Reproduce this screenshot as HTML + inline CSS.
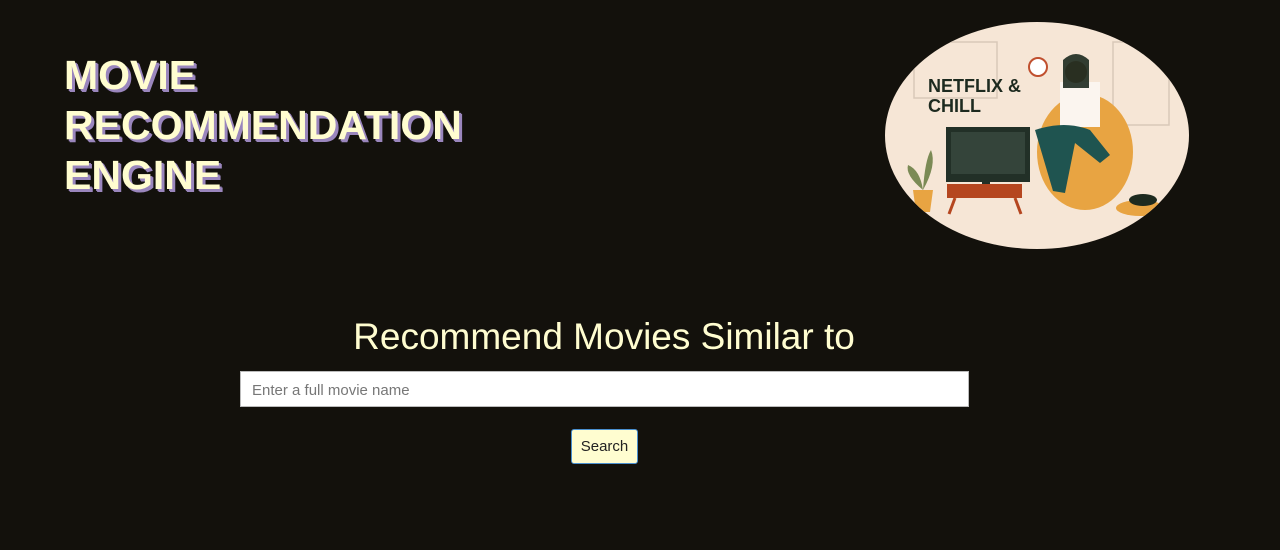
<!DOCTYPE html>
<html><head><meta charset="utf-8"><style>
body{margin:0;width:1280px;height:550px;background:#13110c;overflow:hidden;font-family:"Liberation Sans",sans-serif;position:relative}
.t{position:absolute;left:64px;top:50px;color:#fffdd0;font-weight:bold;font-size:41px;line-height:50px;letter-spacing:0;text-shadow:3px 3px 0 #9a86bd,2px 2px 0 #9a86bd}
h2{position:absolute;left:0;width:1208px;top:316px;margin:0;text-align:center;color:#fffdd0;font-weight:normal;font-size:37px}
.in{position:absolute;left:240px;top:371px;width:727px;height:34px;background:#fff;border:1px solid #bbb;box-sizing:content-box}
.in span{position:absolute;left:11px;top:10px;font-size:15px;color:#777}
.b{position:absolute;left:571px;top:429px;width:65px;height:33px;background:#fffdd0;border:1px solid #4a90d0;border-radius:3px;font-size:15px;color:#222;text-align:center;line-height:34px}
</style></head><body>
<div class="t">MOVIE<br>RECOMMENDATION<br>ENGINE</div>
<svg style="position:absolute;left:885px;top:22px" width="304" height="227" viewBox="0 0 304 227">
<defs><clipPath id="c"><ellipse cx="152" cy="113.5" rx="152" ry="113.5"/></clipPath></defs>
<g clip-path="url(#c)">
<rect width="304" height="227" fill="#f6e6d6"/>
<rect x="29" y="20" width="83" height="56" fill="none" stroke="#d9c8b8" stroke-width="1.5"/>
<rect x="228" y="20" width="56" height="83" fill="none" stroke="#d9c8b8" stroke-width="1.5"/>
<circle cx="153" cy="45" r="9" fill="#fff" stroke="#c0502f" stroke-width="2"/>
<text x="43" y="70" font-family="Liberation Sans" font-weight="bold" font-size="18" fill="#1d2a1f">NETFLIX &amp;</text>
<text x="43" y="90" font-family="Liberation Sans" font-weight="bold" font-size="18" fill="#1d2a1f">CHILL</text>
<ellipse cx="200" cy="130" rx="48" ry="58" fill="#e8a442"/>
<rect x="175" y="60" width="40" height="45" fill="#fbf5ef"/>
<circle cx="191" cy="50" r="11" fill="#9a5a3a"/>
<path d="M178 38 q13 -12 26 0 v28 h-26z" fill="#1d2a1f" opacity=".9"/>
<path d="M150 108 q30 -10 55 0 l20 25 l-10 8 l-25 -20 l-10 50 l-12 -2 z" fill="#1f5450"/>
<rect x="61" y="105" width="84" height="55" fill="#223027"/>
<rect x="66" y="110" width="74" height="42" fill="#34443a"/>
<rect x="97" y="160" width="8" height="10" fill="#223027"/>
<rect x="62" y="162" width="75" height="14" fill="#b5461f"/>
<path d="M70 176 l-6 16 M130 176 l6 16" stroke="#b5461f" stroke-width="3"/>
<path d="M28 168 h20 l-3 22 h-14z" fill="#e8a442"/>
<path d="M38 168 q-18 -15 -15 -25 q12 5 15 25 q2 -30 8 -40 q6 15 -8 40" fill="#7b8a55"/>
<ellipse cx="255" cy="186" rx="24" ry="8" fill="#e8a442"/>
<ellipse cx="258" cy="178" rx="14" ry="6" fill="#1d2a1f"/>
</g></svg>
<h2>Recommend Movies Similar to</h2>
<div class="in"><span>Enter a full movie name</span></div>
<div class="b">Search</div>
</body></html>
